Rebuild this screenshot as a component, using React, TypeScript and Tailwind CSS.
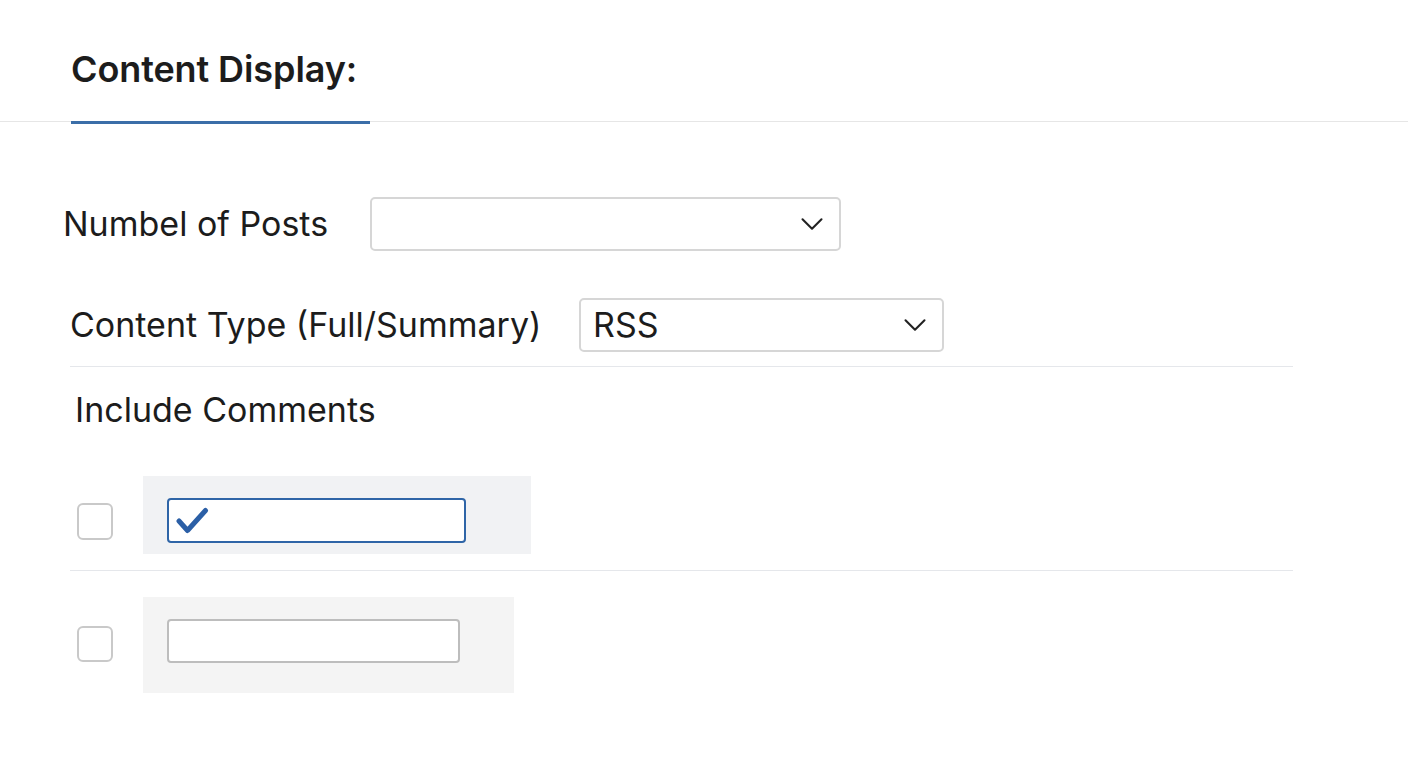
import { ChevronDown } from "lucide-react";

function Select({ width, value }: { width: string; value?: string }) {
  return (
    <div
      className={`${width} h-[54px] flex items-center justify-between pl-[12px] pr-[8px] border-2 border-[#d6d6d6] rounded-[5px] bg-white`}
    >
      <span className="text-[34px] leading-none text-[#1c1c1c]">{value}</span>
      <ChevronDown size={38} strokeWidth={1.3} className="text-[#222]" />
    </div>
  );
}

function Check() {
  return (
    <svg width="34" height="30" viewBox="0 0 34 30" fill="none">
      <path
        d="M4 15 L12.5 24.5 L30.5 4.5"
        stroke="#2b5fa6"
        strokeWidth="5"
        strokeLinecap="round"
        strokeLinejoin="round"
      />
    </svg>
  );
}

export default function App() {
  return (
    <div
      className="w-full h-[768px] bg-white text-[#1c1c1c] overflow-hidden"
      style={{ fontFamily: "Inter, 'Noto Sans', sans-serif" }}
    >
      {/* header */}
      <div className="h-[122px] border-b border-[#e6e6e6]">
        <div className="ml-[71px] w-[299px] h-[124px] pt-[48px] border-b-[3px] border-[#3b6ea8]">
          <h1 className="text-[36px] leading-[43px] font-semibold tracking-[-0.1px]">
            Content Display:
          </h1>
        </div>
      </div>

      <div className="mt-[75px] pl-[63px] flex items-center">
        <div className="w-[307px] text-[34px] leading-[40px]">Numbel of Posts</div>
        <Select width="w-[471px]" />
      </div>

      <div className="mt-[47px] pl-[70px] flex items-center">
        <div className="w-[509px] text-[34px] leading-[40px]">
          Content Type (Full/Summary)
        </div>
        <Select width="w-[365px]" value="RSS" />
      </div>

      <div className="mt-[14px] ml-[70px] w-[1223px] h-px bg-[#e5e7eb]" />

      <div className="mt-[23px] pl-[75px] text-[34px] leading-[40px]">
        Include Comments
      </div>

      <div className="mt-[46px] pl-[77px] flex items-start">
        <div className="mt-[27px] w-[36px] h-[37px] border-2 border-[#c9c9c9] rounded-[6px]" />
        <div className="ml-[30px] w-[388px] h-[78px] bg-[#f1f2f4] pl-[24px] pt-[22px]">
          <div className="w-[299px] h-[45px] border-2 border-[#2f65a7] rounded-[4px] bg-white flex items-center pl-[6px]">
            <Check />
          </div>
        </div>
      </div>

      <div className="mt-[16px] ml-[70px] w-[1223px] h-px bg-[#e5e7eb]" />

      <div className="mt-[26px] pl-[77px] flex items-start">
        <div className="mt-[29px] w-[36px] h-[36px] border-2 border-[#c9c9c9] rounded-[6px]" />
        <div className="ml-[30px] w-[371px] h-[96px] bg-[#f4f4f4] pl-[24px] pt-[22px]">
          <div className="w-[293px] h-[44px] border-2 border-[#bdbdbd] rounded-[4px] bg-white" />
        </div>
      </div>
    </div>
  );
}
